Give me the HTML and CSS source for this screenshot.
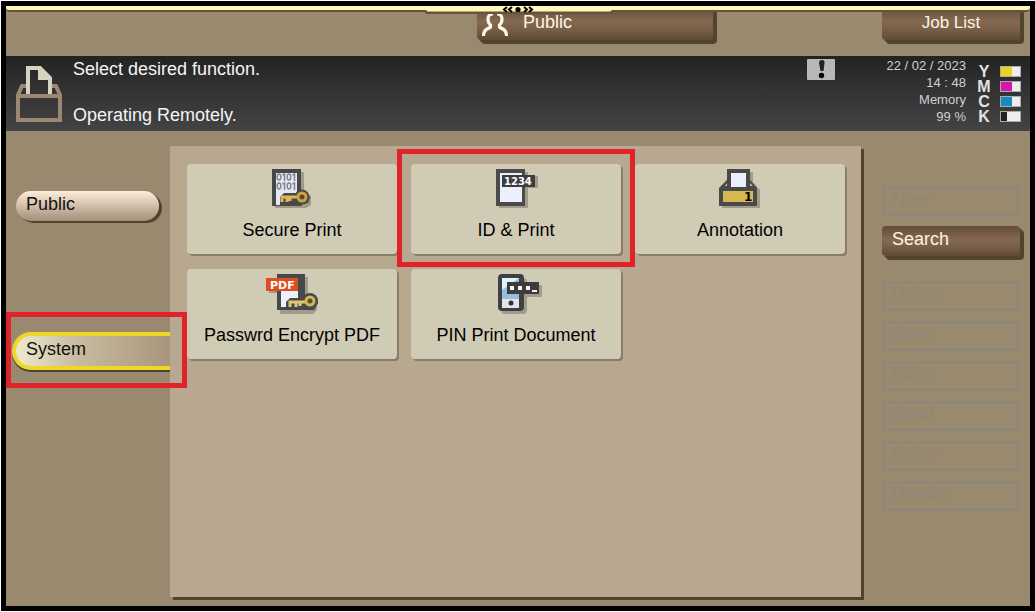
FILE: index.html
```html
<!DOCTYPE html>
<html lang="en">
<head>
<meta charset="utf-8">
<title>User Box</title>
<link rel="stylesheet" href="styles.css">
</head>
<body>
<div class="screen">
  <header class="topbar">
    <div class="strip"></div>
    <button class="notch" aria-label="Toggle panel">
      <svg width="190" height="8" viewBox="0 0 190 8"><path d="M0 0h190l-3 5.500h-184z" fill="#fff6ba"/><path d="M1 5l2 2h183l3-2" fill="none" stroke="#5f5738" stroke-width="2"/><path d="M83 1l-3 2.500 3 2.500M88 1l-3 2.500 3 2.500M100 1l3 2.500-3 2.500M105 1l3 2.500-3 2.500" fill="none" stroke="#000" stroke-width="2"/><circle cx="94" cy="3.500" r="2.600"/></svg>
    </button>
    <button class="dark user">
      <svg width="28" height="26" viewBox="0 0 28 26" fill="none" stroke="#fff8ea" stroke-width="3.200"><path d="M12 3Q7 3 7 8Q7 12 9.500 14V16Q8.500 17 6 18Q2.500 20 2.500 25M16 3Q21 3 21 8Q21 12 18.500 14V16Q19.500 17 22 18Q25.500 20 25.500 25"/></svg>
      <span>Public</span>
    </button>
    <button class="dark jobs">Job List</button>
  </header>

  <section class="status">
    <svg class="box" width="46" height="56" viewBox="0 0 46 56" fill="none"><path d="M10 20H6L2 29M36 20h4l4 9" stroke="#9a8970" stroke-width="4"/><path d="M12 29V2H24L34 12V29M24 2v10h10" stroke="#d6d4c0" stroke-width="4"/><path d="M24 1L35 12H24z" fill="#d6d4c0"/><path d="M2 30h42v24H2z" stroke="#9a8970" stroke-width="4"/></svg>
    <div class="message"><p>Select desired function.</p><p>Operating Remotely.</p></div>
    <svg class="alert" width="28" height="21" viewBox="0 0 28 21"><rect width="28" height="21" rx="1" fill="#b8b8b8"/><path d="M12 4q0-3 3-3t2.500 3l-1 8h-3z" fill="#222"/><circle cx="14.500" cy="16.500" r="2.700" fill="#000"/></svg>
    <div class="clock"><span>22 / 02 / 2023</span><span>14 : 48</span><span>Memory</span><span>99 %</span></div>
    <div class="toner">
      <div><b>Y</b><i class="yellow"></i></div>
      <div><b>M</b><i class="magenta"></i></div>
      <div><b>C</b><i class="cyan"></i></div>
      <div><b>K</b><i class="black"></i></div>
    </div>
  </section>

  <main class="main">
    <nav class="side">
      <button class="tab">Public</button>
      <div class="marked">
        <button class="tab active">System</button>
        <span class="mark"></span>
      </div>
    </nav>

    <section class="panel">
      <button class="card">
        <svg width="48" height="42" viewBox="0 0 48 42"><path d="M7 4h29v22l7 2v9l-5 3H7z" fill="#a49a89"/><path d="M4 1h29v23l6 1 3 4-2 6-5 1-2 2H4z" fill="#474949"/><path d="M8 5h21v32H8z" fill="#e5e8f4"/><g fill="none" stroke="#85858e" stroke-width="1.500"><ellipse cx="11" cy="9" rx="1.800" ry="3"/><ellipse cx="21" cy="9" rx="1.800" ry="3"/><ellipse cx="11" cy="18" rx="1.800" ry="3"/><ellipse cx="21" cy="18" rx="1.800" ry="3"/><path d="M14.500 7l2-1v7M24.500 7l2-1v7M14.500 16l2-1v7M24.500 16l2-1v7"/></g><path d="M12 29l4-4h14v12H12z" fill="#474949"/><circle cx="34" cy="29" r="7.500" fill="#474949"/><path d="M32 29H14v5M19 29v5M22 29v4" stroke="#e2b559" stroke-width="3" fill="none"/><circle cx="34" cy="29" r="4" fill="#59492a" stroke="#d0a23d" stroke-width="3"/></svg>
        <span>Secure Print</span>
      </button>
      <div class="marked">
        <button class="card">
          <svg width="48" height="42" viewBox="0 0 48 42"><path d="M7 4h29v4h10v12H36v20H7z" fill="#a49a89"/><path d="M4 1h29v37H4z" fill="#494b4b"/><path d="M8 5h22v29H8z" fill="#edf0fa"/><path d="M10 7h33v12H10z" fill="#3c3d3e"/><text x="12" y="17" class="digits" fill="#fff">1234</text></svg>
          <span>ID &amp; Print</span>
        </button>
        <span class="mark"></span>
      </div>
      <button class="card">
        <svg width="46" height="42" viewBox="0 0 46 42"><path d="M13 4h23v10l7 8v18H5V22z" fill="#a49a89"/><path d="M10 1h23v11l7 8v18H2V20l8-8z" fill="#494a48"/><path d="M14 5h15v14H14z" fill="#eceffa"/><path d="M8 18l2-3v3zM33 15l3 3h-3z" fill="#c8bc8e"/><path d="M6 23h30v11H6z" fill="#d4b851"/><text x="27" y="33" class="one">1</text></svg>
        <span>Annotation</span>
      </button>
      <button class="card">
        <svg width="58" height="42" viewBox="0 0 58 42"><path d="M6 7h36V4h3v21l9 3v9l-4 4H17V20H6z" fill="#a49a89"/><path d="M14 1h28v23l10 1 3 5-4 7H14z" fill="#474949"/><path d="M18 5h17v29H18z" fill="#edf0fa"/><path d="M23 29l4-4h18v12H23z" fill="#474949"/><circle cx="47" cy="28" r="8" fill="#474949"/><path d="M45 29H27v5M33 29v5M37 29v4" stroke="#e2c570" stroke-width="3" fill="none"/><circle cx="47" cy="28" r="4" fill="#555038" stroke="#d3b456" stroke-width="3"/><path d="M3 5h32v13H3z" fill="#df4e20"/><text x="7" y="16" class="pdf" fill="#fff">PDF</text></svg>
        <span>Passwrd Encrypt PDF</span>
      </button>
      <button class="card">
        <svg width="46" height="42" viewBox="0 0 46 42"><rect x="8" y="5" width="26" height="36" rx="4" fill="#a49a89"/><path d="M20 12h29v12H20z" fill="#a49a89"/><rect x="5" y="1" width="26" height="37" rx="4" fill="#3e4142"/><path d="M9 5h17v21H9z" fill="#94bfe0"/><path d="M9 5h17L9 17z" fill="#e5f1fa"/><path d="M9 26h17v9H9z" fill="#e3e5ec"/><circle cx="18" cy="30" r="2.500" fill="#39322e"/><path d="M14 9h32v12H14z" fill="#3c3c3d"/><path d="M17 13h4v4h-4zM25 13h4v4h-4zM33 13h4v4h-4zM39 17h5v2h-5z" fill="#f4f3ee"/></svg>
        <span>PIN Print Document</span>
      </button>
    </section>

    <aside class="actions">
      <button class="ghost" disabled>New</button>
      <button class="dark search">Search</button>
      <button class="ghost" disabled>Delete</button>
      <button class="ghost" disabled>Save</button>
      <button class="ghost" disabled>Filing</button>
      <button class="ghost" disabled>Send</button>
      <button class="ghost" disabled>Other</button>
      <button class="ghost" disabled>Details</button>
    </aside>
  </main>
</div>
</body>
</html>
```
FILE: styles.css
```css
* { box-sizing: border-box; }
body {
  margin: 0;
  padding: 1px 0 1px 1px;
  min-height: 100vh;
  display: flex;
  background: #fff;
  font-family: "Liberation Sans", Arial, sans-serif;
  font-size: 18px;
  line-height: 20px;
}
button { font: inherit; border: 0; padding: 0; margin: 0; cursor: pointer; }
p { margin: 0; }
.screen {
  flex: 1;
  display: flex;
  flex-direction: column;
  border: 5px solid #000;
  background: #99896f;
}
.topbar {
  position: relative;
  display: grid;
  grid-template-columns: 1fr 236px 169px 138px;
  height: 50px;
  padding-right: 10px;
}
.strip {
  position: absolute;
  inset: 0 0 auto;
  height: 6px;
  background: #fff6ba;
  border-bottom: 2px solid #5f5738;
  border-radius: 0 0 4px 4px;
}
.notch {
  position: absolute;
  top: 0;
  left: 50%;
  margin-left: -94px;
  height: 8px;
  background: none;
}
.notch svg { display: block; }
.dark {
  color: #fff3e4;
  background: linear-gradient(#624c3a, #846850 45%, #7a614a 65%, #5f4a37);
  border-radius: 4px;
  box-shadow: 2px 2px #51442f, 4px 4px #51442f;
}
.topbar .dark { height: 34px; }
.user {
  grid-column: 2;
  display: flex;
  align-items: center;
  gap: 14px;
  padding: 2px 0 0 4px;
}
.user span { padding-bottom: 4px; }
.jobs { grid-column: 4; font-size: 17px; }
.status {
  display: flex;
  height: 75px;
  padding: 0 9px 0 10px;
  color: #f4f4f4;
  background: linear-gradient(#222, #333 45%, #434343);
}
.box { margin-top: 10px; }
.message {
  flex: 1;
  display: flex;
  flex-direction: column;
  gap: 26px;
  padding: 3px 0 0 11px;
}
.alert { margin-top: 3px; }
.clock {
  display: flex;
  flex-direction: column;
  width: 131px;
  padding-top: 1px;
  font-size: 13px;
  line-height: 17px;
  text-align: right;
  color: #d0d0d0;
}
.toner { width: 55px; padding: 8px 0 0 10px; }
.toner div { display: flex; align-items: center; justify-content: space-between; height: 15px; }
.toner b { width: 16px; text-align: center; font-size: 16px; line-height: 15px; color: #e2e2e2; }
.toner i { width: 21px; height: 11px; border: 1px solid #aaa; }
.yellow { background: linear-gradient(90deg, #e9d51e 60%, #eee 60%); }
.magenta { background: linear-gradient(90deg, #d617ad 60%, #eee 60%); }
.cyan { background: linear-gradient(90deg, #168bc2 60%, #eee 60%); }
.black { background: linear-gradient(90deg, #222 30%, #eee 30%); }
.main {
  flex: 1;
  display: grid;
  grid-template-columns: 164px 1fr 169px;
}
.side { padding-top: 60px; }
.tab {
  display: block;
  width: 143px;
  height: 30px;
  margin-left: 10px;
  padding: 0 0 4px 10px;
  text-align: left;
  color: #111;
  border-radius: 15px;
  background: linear-gradient(#ffeedb, #d0bdaa 50%, #a39077);
  box-shadow: 1px 1px #51442f, 3px 2px #51442f;
}
.marked { position: relative; }
.mark {
  position: absolute;
  border: 5px solid #e02328;
  pointer-events: none;
}
.side .marked { margin-top: 111px; }
.side .mark { inset: -20px -17px -18px 0; }
.active {
  width: 158px;
  height: 38px;
  margin-left: 6px;
  padding: 0 0 4px 10px;
  border: 4px solid #efd62a;
  border-right: 0;
  border-radius: 19px 0 0 19px;
  background: linear-gradient(90deg, #eee9cd, #c8bba0 40%, #a8967c);
  box-shadow: 0 2px #51442f;
}
.panel {
  display: grid;
  grid-template-columns: repeat(3, 1fr);
  grid-auto-rows: 90px;
  gap: 15px 14px;
  margin: 15px 0 9px;
  padding: 18px 16px 18px 17px;
  background: #b8a88f;
  box-shadow: 3px 3px #51442f;
}
.card {
  display: flex;
  flex-direction: column;
  align-items: center;
  gap: 10px;
  width: 100%;
  height: 90px;
  padding-top: 4px;
  color: #000;
  background: #d0cbb5;
  border-radius: 4px;
  box-shadow: 2px 2px #8a7d67;
}
.card svg { overflow: visible; }
.panel .mark { inset: -15px -14px -13px; }
.digits, .one, .pdf { font-family: "DejaVu Sans", sans-serif; font-weight: bold; }
.digits { font-size: 10px; }
.one { font-size: 12px; }
.pdf { font-size: 11px; }
.actions {
  display: flex;
  flex-direction: column;
  gap: 10px;
  padding: 55px 10px 0 21px;
}
.actions button { height: 30px; padding: 0 10px 4px; text-align: left; }
.actions .search { margin-bottom: 15px; }
.actions .ghost {
  color: #928776;
  background: none;
  border: 3px solid #8f887a;
  padding: 0 7px 4px;
}
```
